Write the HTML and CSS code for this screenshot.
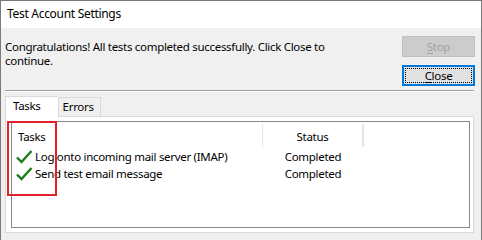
FILE: index.html
```
<!DOCTYPE html>
<html>
<head>
<meta charset="utf-8">
<link rel="stylesheet" href="styles.css">
</head>
<body>
<div class="window">
  <div class="titlebar">Test Account Settings</div>
  <div class="top">
    <div class="message">Congratulations! All tests completed successfully. Click Close to continue.</div>
    <div class="buttons">
      <div class="btn disabled"><span class="u">S</span>top</div>
      <div class="btn default"><span class="focus"><span class="u">C</span>lose</span></div>
    </div>
  </div>
  <div class="separator"></div>
  <div class="tabs">
    <div class="tab active">Tasks</div>
    <div class="tab">Errors</div>
  </div>
  <div class="panel">
    <div class="listview">
      <div class="row header">
        <div class="col c1">Tasks</div>
        <div class="col c2">Status</div>
        <div class="col c3"></div>
      </div>
      <div class="row item">
        <div class="col c1"><svg class="check" viewBox="0 0 17 16" width="17" height="16"><path d="M1 8.5 L5.5 13 L15.5 2" fill="none" stroke="#1c7d1c" stroke-width="2.4"/></svg>Log onto incoming mail server (IMAP)</div>
        <div class="col c2">Completed</div>
      </div>
      <div class="row item">
        <div class="col c1"><svg class="check" viewBox="0 0 17 16" width="17" height="16"><path d="M1 8.5 L5.5 13 L15.5 2" fill="none" stroke="#1c7d1c" stroke-width="2.4"/></svg>Send test email message</div>
        <div class="col c2">Completed</div>
      </div>
    </div>
  </div>
  <div class="annotation"></div>
</div>
</body>
</html>
```
FILE: styles.css
```
* { box-sizing: border-box; }
html, body { margin: 0; padding: 0; background: #f0f0f0; }
body {
  font-family: "Noto Sans", "Open Sans", sans-serif;
  font-size: 11.5px;
  letter-spacing: -0.3px;
  color: #000;
}
.window {
  position: relative;
  width: 482px;
  height: 240px;
  border: 1px solid #7a7a7a;
  border-bottom: none;
  background: #f0f0f0;
  display: flex;
  flex-direction: column;
}
.titlebar {
  height: 27px;
  background: #fff;
  padding-left: 6px;
  line-height: 26px;
  font-size: 12px;
  flex: none;
}
.top {
  display: flex;
  padding: 8px 6px 0 4px;
  height: 62px;
}
.message {
  width: 340px;
  margin-top: 4px;
  line-height: 14px;
}
.buttons {
  margin-left: auto;
  display: flex;
  flex-direction: column;
  gap: 8px;
}
.btn {
  width: 73px;
  height: 21px;
  display: flex;
  align-items: center;
  justify-content: center;
  background: #e1e1e1;
  border: 1px solid #adadad;
}
.btn.disabled {
  background: #cccccc;
  border-color: #bfbfbf;
  color: #a0a0a0;
}
.btn.default {
  border: 2px solid #0078d7;
  padding: 1px;
}
.focus {
  width: 100%;
  height: 100%;
  border: 1px dotted #000;
  display: flex;
  align-items: center;
  justify-content: center;
}
.u { text-decoration: underline; text-underline-offset: 2px; }
.separator {
  margin: 0 7px 0 4px;
  border-top: 1px solid #a0a0a0;
  border-bottom: 1px solid #fff;
}
.tabs {
  display: flex;
  align-items: flex-end;
  margin: 3px 0 0 4px;
  height: 21px;
}
.tab {
  height: 19px;
  padding: 0 6px 0 4px;
  border: 1px solid #d9d9d9;
  border-bottom: none;
  background: #f0f0f0;
  line-height: 18px;
}
.tab.active {
  height: 21px;
  padding: 0 17px 0 7px;
  background: #fff;
  border-right: none;
  margin-bottom: -1px;
  position: relative;
  z-index: 1;
  line-height: 17px;
}
.panel {
  margin: 0 7px 0 4px;
  height: 117px;
  background: #fff;
  border: 1px solid #d9d9d9;
  padding: 4px 3px 4px 5px;
  display: flex;
}
.listview {
  flex: 1;
  border: 1px solid #828790;
  background: #fff;
}
.row { display: flex; }
.header { height: 26px; padding-top: 2px; }
.header .col {
  border-right: 1px solid #e5e5e5;
  line-height: 26px;
  height: 23px;
}
.item { height: 17px; line-height: 17px; }
.col { white-space: nowrap; }
.c1 { width: 251px; padding-left: 6px; display: flex; align-items: center; }
.header .c1 { align-items: flex-start; }
.item .c1 { padding-left: 4px; }
.c2 { width: 100px; text-align: center; }
.c3 { width: 0; }
.check { flex: none; margin-right: 2px; }
.annotation {
  position: absolute;
  left: 6px;
  top: 120px;
  width: 50px;
  height: 75px;
  border: 2px solid #e4202a;
}
```
